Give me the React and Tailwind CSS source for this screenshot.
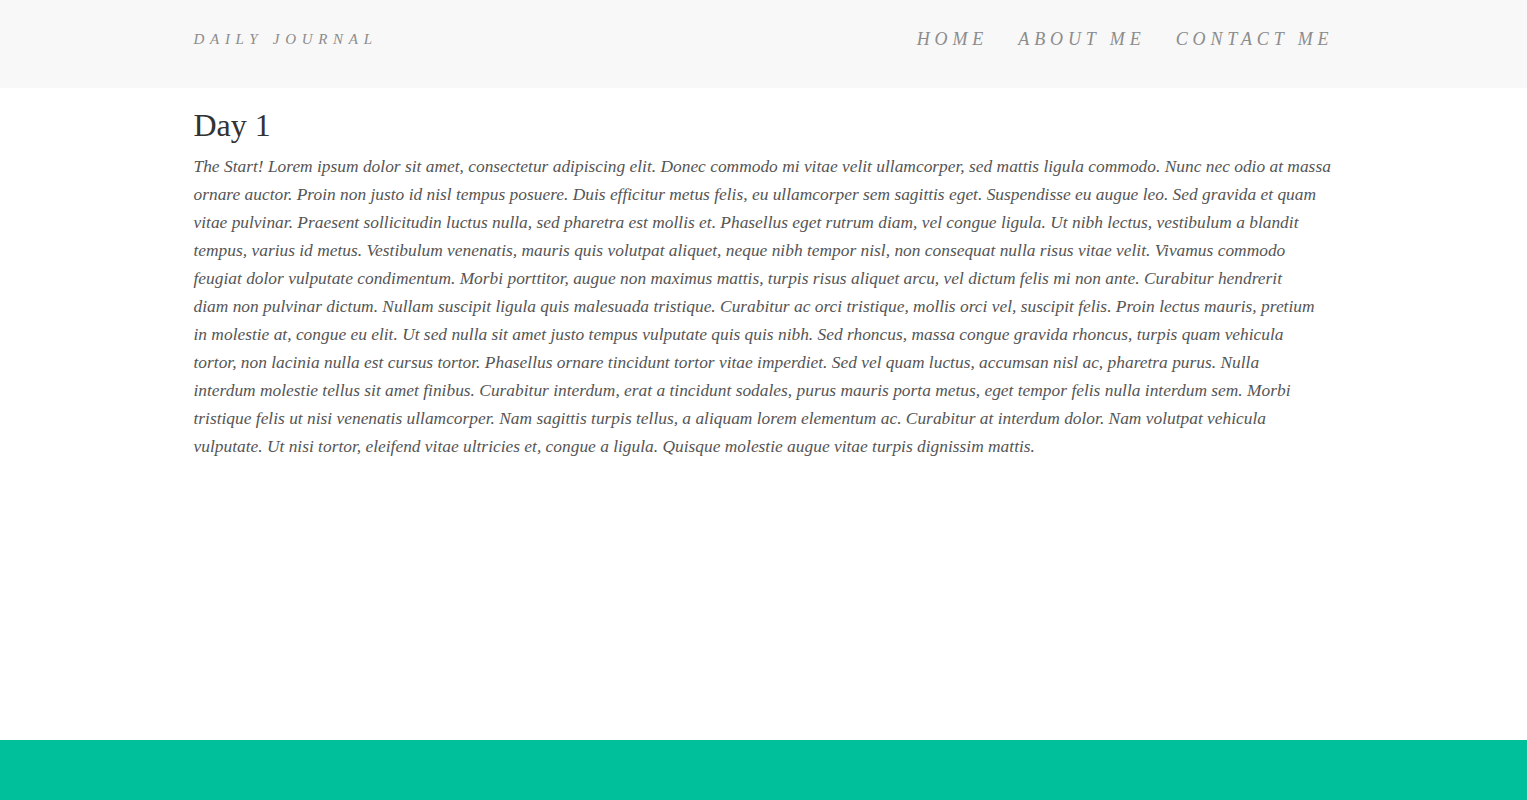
import React from "react";

const lines = [
  "The Start! Lorem ipsum dolor sit amet, consectetur adipiscing elit. Donec commodo mi vitae velit ullamcorper, sed mattis ligula commodo. Nunc nec odio at massa",
  "ornare auctor. Proin non justo id nisl tempus posuere. Duis efficitur metus felis, eu ullamcorper sem sagittis eget. Suspendisse eu augue leo. Sed gravida et quam",
  "vitae pulvinar. Praesent sollicitudin luctus nulla, sed pharetra est mollis et. Phasellus eget rutrum diam, vel congue ligula. Ut nibh lectus, vestibulum a blandit",
  "tempus, varius id metus. Vestibulum venenatis, mauris quis volutpat aliquet, neque nibh tempor nisl, non consequat nulla risus vitae velit. Vivamus commodo",
  "feugiat dolor vulputate condimentum. Morbi porttitor, augue non maximus mattis, turpis risus aliquet arcu, vel dictum felis mi non ante. Curabitur hendrerit",
  "diam non pulvinar dictum. Nullam suscipit ligula quis malesuada tristique. Curabitur ac orci tristique, mollis orci vel, suscipit felis. Proin lectus mauris, pretium",
  "in molestie at, congue eu elit. Ut sed nulla sit amet justo tempus vulputate quis quis nibh. Sed rhoncus, massa congue gravida rhoncus, turpis quam vehicula",
  "tortor, non lacinia nulla est cursus tortor. Phasellus ornare tincidunt tortor vitae imperdiet. Sed vel quam luctus, accumsan nisl ac, pharetra purus. Nulla",
  "interdum molestie tellus sit amet finibus. Curabitur interdum, erat a tincidunt sodales, purus mauris porta metus, eget tempor felis nulla interdum sem. Morbi",
  "tristique felis ut nisi venenatis ullamcorper. Nam sagittis turpis tellus, a aliquam lorem elementum ac. Curabitur at interdum dolor. Nam volutpat vehicula",
  "vulputate. Ut nisi tortor, eleifend vitae ultricies et, congue a ligula. Quisque molestie augue vitae turpis dignissim mattis.",
];

const navItems = ["HOME", "ABOUT ME", "CONTACT ME"];

export default function App() {
  return (
    <div className="flex min-h-screen flex-col bg-white font-['Liberation_Serif',serif]">
      <header className="h-[88px] bg-[#f8f8f8]">
        <div className="mx-auto flex h-full max-w-[1140px] items-start justify-between pt-[28px]">
          <a className="text-[15px] italic tracking-[5.7px] text-[#8c8c8c]">
            DAILY JOURNAL
          </a>
          <nav className="flex gap-[30px]">
            {navItems.map((item) => (
              <a
                key={item}
                className="text-[18px] italic leading-[22px] tracking-[4.9px] text-[#8c8c8c]"
              >
                {item}
              </a>
            ))}
          </nav>
        </div>
      </header>

      <main className="mx-auto w-full max-w-[1140px] flex-1 pt-[17px]">
        <h1 className="text-[32px] leading-[40px] text-[#333]">Day 1</h1>
        <p className="mt-[7px] text-[17.4px] italic leading-[28px] text-[#555]">
          {lines.map((line, i) => (
            <span key={i} className="block whitespace-nowrap">
              {line}
            </span>
          ))}
        </p>
      </main>

      <footer className="h-[60px] bg-[#00bf9b]" />
    </div>
  );
}
